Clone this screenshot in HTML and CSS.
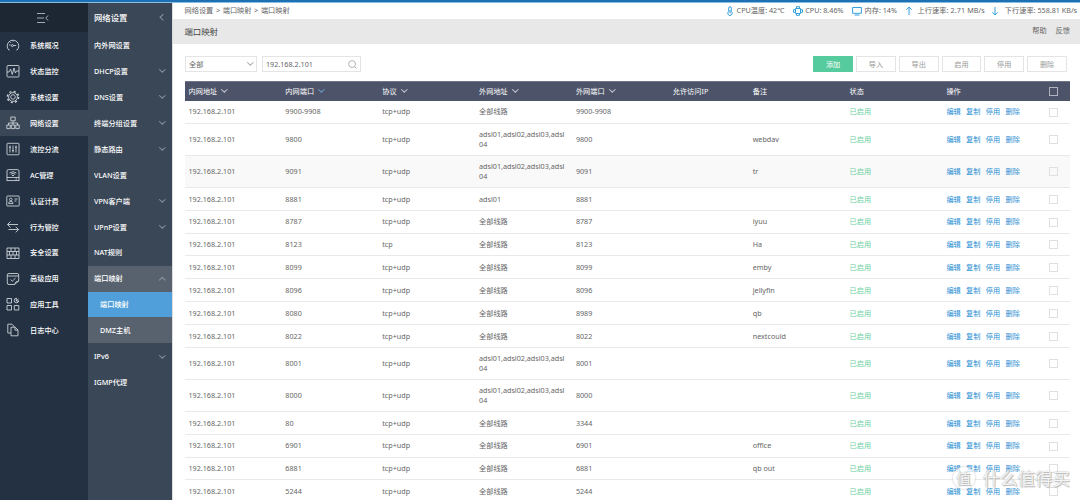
FILE: index.html
```
<!DOCTYPE html>
<html lang="zh-CN">
<head>
	<meta charset="UTF-8">
	<title>端口映射</title>
	<link rel="stylesheet" href="styles.css">
</head>
<body>
	<div class="topline"></div>
	<div class="layout">
		<div class="sidebar">
			<div class="fold">
				<svg width="14" height="12" viewBox="0 0 14 12"><path d="M1 1.5h8M1 6h7M1 10.5h8M12 3.5L9.8 6L12 8.5"/></svg>
			</div>
			<ul class="menu">
				<li><svg viewBox="0 0 14 14"><path d="M3.6 12H2.8A5.8 5.8 0 1 1 11.2 12H10.4M3 7h1.6M7 7.5h3.2M4.3 4.3l.7.7M7 2.5v1"/><circle cx="6.4" cy="7.6" r="1"/></svg>系统概况</li>
				<li><svg viewBox="0 0 14 14"><rect x="1" y="1.5" width="12" height="11.5" rx="1"/><path d="M1 8h2l1.6-3 1.7 5.5L8 4l1.4 5 1-2H13"/></svg>状态监控</li>
				<li><svg viewBox="0 0 14 14"><circle cx="7" cy="7" r="4.4"/><circle cx="7" cy="7" r="2.3"/><circle cx="7" cy="7" r="5.6" stroke-width="1.5" stroke-dasharray="2.1 2.3"/></svg>系统设置</li>
				<li class="on"><svg viewBox="0 0 14 14"><path d="M4.8 1h4.4v3.8H4.8zM7 4.8v4M2.5 9V7h9v2M.8 9h3.4v3.6H.8zM5.3 9h3.4v3.6H5.3zM9.8 9h3.4v3.6H9.8z"/></svg>网络设置</li>
				<li><svg viewBox="0 0 14 14"><rect x="1" y="1.3" width="12" height="11.5" rx=".6"/><path d="M4 3.5v7M7 3.5v7M10 3.5v7M3 5.2h2M6 8.6h2M9 5.2h2"/></svg>流控分流</li>
				<li><svg viewBox="0 0 14 14"><rect x="1" y="9.4" width="12" height="3.2"/><path d="M1 9.4V3q0-1.4 1.4-1.4h9.2Q13 1.600 13 3v6.400M3.600 5q3.400-2.600 6.800 0M4.700 6.300q2.300-1.700 4.600 0M6 7.500h2M9.500 11h1.600"/></svg>AC管理</li>
				<li><svg viewBox="0 0 14 14"><rect x=".8" y="2" width="12.400" height="10" rx=".5"/><circle cx="4.800" cy="5.500" r="1.300"/><path d="M2.700 9.600V9q0-1.500 2.100-1.500T6.900 9v.6zM8.500 5h3M8.500 7h2"/></svg>认证计费</li>
				<li><svg viewBox="0 0 14 14"><path d="M12 4.500H1.500M4.500 1.500l-3 3 3 3M2.500 9.500h10M9.700 6.800l2.900 2.700-2.900 2.900"/></svg>行为管控</li>
				<li><svg viewBox="0 0 14 14"><path d="M1 2h12v10.500H1zM1 5.500h12M1 9h12M5 2v3.500M9 2v3.500M3.500 5.500V9M10.500 5.500V9M7 5.500V9M5 9v3.500M9 9v3.500"/></svg>安全设置</li>
				<li><svg viewBox="0 0 14 14"><path d="M8.500 12.500H3Q1.300 12.500 1.300 11V3Q1.300 1.500 3 1.500h8.300Q12.700 1.500 12.700 3v6zM8.500 12.500q.8-3.400 4.200-3.500M1.500 4h11M4.500 7.500l1.800 1.700L9.500 6"/></svg>高级应用</li>
				<li><svg viewBox="0 0 14 14"><path d="M1 1.500h4.500V6H1zM1 8.500h4.500V13H1zM8.300 8.500h4.500V13H8.300zM10.500 1.200a2.300 2.300 0 1 0 2.300 2.600l-2 .5-.6-.8z"/><path d="M10 4l2.500-2"/></svg>应用工具</li>
				<li><svg viewBox="0 0 14 14"><path d="M5 10H1.800V1.200H6l2 2v1M5 4.200h4.200l2.800 2.800v5.800H5zM9 4.300V7.200h3"/></svg>日志中心</li>
			</ul>
		</div>
		<div class="submenu">
			<div class="sub-title">网络设置<i class="arrow left"></i></div>
			<ul>
				<li>内外网设置</li>
				<li>DHCP设置<i class="arrow"></i></li>
				<li>DNS设置<i class="arrow"></i></li>
				<li>终端分组设置<i class="arrow"></i></li>
				<li>静态路由<i class="arrow"></i></li>
				<li>VLAN设置</li>
				<li>VPN客户端<i class="arrow"></i></li>
				<li>UPnP设置<i class="arrow"></i></li>
				<li>NAT规则</li>
				<li class="open">端口映射<i class="arrow up"></i></li>
				<li class="child on">端口映射</li>
				<li class="child">DMZ主机</li>
				<li>IPv6<i class="arrow"></i></li>
				<li>IGMP代理</li>
			</ul>
		</div>
		<div class="main">
			<div class="crumbs">
				<div class="path">网络设置 &gt; 端口映射 &gt; 端口映射</div>
				<div class="stats">
					<span class="s-temp"><svg viewBox="0 0 10 10"><path d="M3.700 5.500V2a1.300 1.300 0 0 1 2.600 0v3.500a2.200 2.200 0 1 1-2.600 0zM5 4v3.500"/></svg>CPU温度: 42℃</span>
					<span class="s-cpu"><svg viewBox="0 0 10 10"><path d="M2.500 2.500h5v5h-5zM3.500 2.500V.7h3v1.800M3.500 7.500v1.800h3V7.500M2.500 3.700H.5v2.600h2M7.500 3.700h2v2.600h-2"/></svg>CPU: 8.46%</span>
					<span class="s-mem"><svg viewBox="0 0 10 10"><path d="M.6 1.500h8.800v5.800H.6zM2.500 9h5"/></svg>内存: 14%</span>
					<span class="s-up"><svg viewBox="0 0 10 10"><path d="M5 9V1M2.300 3.700L5 1l2.700 2.700"/></svg>上行速率: 2.71 MB/s</span>
					<span class="s-down"><svg viewBox="0 0 10 10"><path d="M5 1v8M2.300 6.300L5 9l2.700-2.700"/></svg>下行速率: 558.81 KB/s</span>
				</div>
			</div>
			<div class="title">
				<h1>端口映射</h1>
				<div class="help"><span>帮助</span><span>反馈</span></div>
			</div>
			<div class="content">
				<div class="tools">
					<div class="select">全部<i class="arrow"></i></div>
					<div class="search">192.168.2.101<svg viewBox="0 0 10 10"><circle cx="4.500" cy="4.500" r="3.800"/><path d="M7.200 7.200l2.300 2.300"/></svg></div>
					<div class="btns">
						<b class="add">添加</b><b>导入</b><b>导出</b><b>启用</b><b>停用</b><b>删除</b>
					</div>
				</div>
				<div class="table">
					<div class="row head">
						<div>内网地址<i class="arrow"></i></div>
						<div>内网端口<i class="arrow blue"></i></div>
						<div>协议<i class="arrow"></i></div>
						<div>外网地址<i class="arrow"></i></div>
						<div>外网端口<i class="arrow"></i></div>
						<div>允许访问IP</div>
						<div>备注</div>
						<div>状态</div>
						<div>操作</div>
						<div><i class="check"></i></div>
					</div>
				</div>
			</div>
		</div>
	</div>
	<div class="mark"><em>值</em>什么值得买</div>

	<script>
		var all = "全部线路";
		var adsl = "adsl01,adsl02,adsl03,adsl04";
		// 内网端口, 协议, 外网地址, 外网端口, 备注
		var rows = [
			["9900-9908", "tcp+udp", all, "9900-9908", ""],
			["9800", "tcp+udp", adsl, "9800", "webdav"],
			["9091", "tcp+udp", adsl, "9091", "tr"],
			["8881", "tcp+udp", "adsl01", "8881", ""],
			["8787", "tcp+udp", all, "8787", "iyuu"],
			["8123", "tcp", all, "8123", "Ha"],
			["8099", "tcp+udp", all, "8099", "emby"],
			["8096", "tcp+udp", all, "8096", "jellyfin"],
			["8080", "tcp+udp", all, "8989", "qb"],
			["8022", "tcp+udp", all, "8022", "nextcould"],
			["8001", "tcp+udp", adsl, "8001", ""],
			["8000", "tcp+udp", adsl, "8000", ""],
			["80", "tcp+udp", all, "3344", ""],
			["6901", "tcp+udp", all, "6901", "office"],
			["6881", "tcp+udp", all, "6881", "qb out"],
			["5244", "tcp+udp", all, "5244", ""]
		];
		var table = document.querySelector(".table");
		for(var x=0; x<rows.length; x++){
			var r = rows[x];
			var row = document.createElement("div");
			row.className = "row";
			if(r[2] == adsl){
				row.className += " tall";
			}
			if(x == 2){
				row.className += " hover";
			}
			var cells = ["192.168.2.101", r[0], r[1], r[2], r[3], "", r[4],
				"<span class='ok'>已启用</span>",
				"<a>编辑</a><a>复制</a><a>停用</a><a>删除</a>",
				"<i class='check'></i>"];
			row.innerHTML = "<div>" + cells.join("</div><div>") + "</div>";
			table.appendChild(row);
		}
	</script>
</body>
</html>
```
FILE: styles.css
```
*{
	box-sizing: border-box;
	margin: 0;
	padding: 0;
}
html, body{
	height: 500px;
	overflow: hidden;
}
body{
	font: 7.2px/9.4px "Noto Sans", "Noto Sans CJK SC", sans-serif;
	color: #666;
	background: #fff;
	position: relative;
}
ul{
	list-style: none;
}
svg{
	fill: none;
	stroke: currentColor;
	flex: none;
}
.topline{
	height: 3px;
	background: #1c71b4;
	border-bottom: 1px solid #8cbce0;
}
.layout{
	display: flex;
	height: 497px;
}

/* 左侧菜单 */
.sidebar{
	width: 88px;
	background: #233142;
	color: #fff;
	flex: none;
}
.fold{
	height: 29.3px;
	background: #1c2733;
	display: flex;
	align-items: center;
	padding-left: 36px;
	color: #a3abb3;
}
.menu li{
	height: 25.93px;
	display: flex;
	align-items: center;
	padding: 1px 0 0 6px;
	font-weight: 500;
}
.menu li.on{
	background: #3a4757;
}
.menu svg{
	width: 14px;
	height: 14px;
	margin: -1px 10px 0 0;
	stroke-width: .9;
	color: #ccd1d7;
}
.submenu{
	width: 84px;
	background: #3a4757;
	color: #fff;
	flex: none;
	font-weight: 500;
}
.sub-title{
	height: 29.3px;
	display: flex;
	align-items: center;
	justify-content: space-between;
	padding: 0 6px;
	font-size: 8.4px;
}
.submenu li{
	height: 25.93px;
	display: flex;
	align-items: center;
	justify-content: space-between;
	padding: 1px 6px 0;
}
.submenu li.open, .submenu li.child{
	background: #58626f;
}
.submenu li.child{
	padding-left: 12px;
}
.submenu li.on{
	background: #509fda;
}
.arrow{
	display: inline-block;
	width: 4.600px;
	height: 4.600px;
	border: solid currentColor;
	border-width: 0 .8px .8px 0;
	transform: translateY(-2px) scaleY(.9) rotate(45deg);
	flex: none;
}
.submenu .arrow{
	margin-right: 1px;
	color: #8d96a1;
}
.submenu .arrow.up{
	transform: translateY(1px) scaleY(.9) rotate(225deg);
}
.submenu .arrow.left{
	transform: translateX(1px) rotate(135deg);
}

/* 右侧内容 */
.main{
	flex: 1;
	min-width: 0;
	border-left: 1px solid #dcdcdf;
}
.crumbs{
	height: 16px;
	display: flex;
	align-items: center;
	justify-content: space-between;
	padding: 0 3px 0 11.500px;
	white-space: nowrap;
}
.path{
	word-spacing: .8px;
}
.stats{
	display: flex;
}
.stats span{
	display: flex;
	align-items: center;
}
.stats svg{
	width: 10px;
	height: 10px;
	margin-right: 2px;
	color: #35a0dc;
}
.stats .s-cpu{
	margin-left: 9px;
}
.stats .s-mem{
	margin-left: 8px;
}
.stats .s-up{
	margin-left: 7.500px;
	letter-spacing: .1px;
}
.stats .s-down{
	margin-left: 5px;
}
.stats .s-mem svg, .stats .s-up svg{
	margin-right: 3px;
}
.stats .s-down svg{
	margin-right: 5px;
}
.title{
	height: 25px;
	background: #e8e8e8;
	display: flex;
	align-items: center;
	justify-content: space-between;
	padding: 0 10px 0 11.500px;
}
.title h1{
	font-size: 8.400px;
	font-weight: 400;
	color: #444;
}
.help{
	margin-top: -2px;
}
.help span{
	margin-left: 9px;
}
.content{
	padding: 12px 10px 0 12px;
}
.tools{
	display: flex;
	height: 17px;
}
.select, .search, .btns b{
	height: 16px;
	border: 1px solid #e4e4e4;
	display: flex;
	align-items: center;
	justify-content: space-between;
	background: #fff;
	padding-top: 1px;
}
.select{
	width: 72px;
	padding-left: 3px;
	padding-right: 3px;
	margin-right: 5px;
}
.select .arrow, .search svg{
	color: #aaa;
}
.search{
	width: 99px;
	padding-left: 3px;
	padding-right: 3px;
}
.search svg{
	width: 9px;
	height: 9px;
}
.btns{
	margin-left: auto;
	display: flex;
	gap: 3px;
	padding-right: 3px;
}
.btns b{
	width: 39.800px;
	justify-content: center;
	font-weight: 400;
	color: #999;
}
.btns .add{
	background: #56cb9d;
	border-color: #56cb9d;
	color: #fff;
}
.table{
	margin-top: 8px;
}
.row{
	display: grid;
	grid-template-columns: 96.850px 96.850px 96.850px 96.850px 96.850px 80px 96.850px 96.850px 98.500px 1fr;
	align-items: center;
	height: 22.870px;
	border-bottom: 1px solid #e9e9e9;
	color: #666;
}
.row div{
	padding: 1px 6px 0 3.500px;
	word-break: break-all;
}
.row.tall{
	height: 32px;
}
.row.hover{
	background: #f9f9f9;
}
.row.head{
	height: 19.500px;
	background: #4d5368;
	border: 0;
	border-top: 1px solid #70768a;
	color: #fff;
}
.row.head div{
	padding-top: 0;
}
.row.head + .row{
	height: 23.300px;
}
.row.head .arrow{
	margin-left: 5px;
	color: #ccd;
}
.row.head .arrow{
	vertical-align: 0;
}
.row.head .arrow.blue{
	color: #6d9fd0;
}
.ok{
	color: #6bcf9f;
}
.row a{
	color: #2b8fd4;
	margin-right: 5.300px;
}
.row div:nth-child(9){
	padding-right: 0;
	white-space: nowrap;
}
.check{
	display: block;
	width: 9px;
	height: 9px;
	border: 1px solid #e0e0e0;
	margin-left: 4px;
}
.head .check{
	border-color: #b0b3bf;
}

/* 水印 */
.mark{
	position: absolute;
	right: 10px;
	bottom: 11px;
	display: flex;
	align-items: center;
	font-size: 17.500px;
	line-height: 22px;
	color: rgba(255,255,255,.9);
	text-shadow: 0 0 1px #999, 1px 1px 1px #bbb;
}
.mark em{
	width: 22px;
	height: 22px;
	border-radius: 50%;
	background: rgba(255,255,255,.75);
	box-shadow: 0 0 2px #aaa;
	font-style: normal;
	font-size: 15px;
	text-align: center;
	margin-right: 8px;
}
```
